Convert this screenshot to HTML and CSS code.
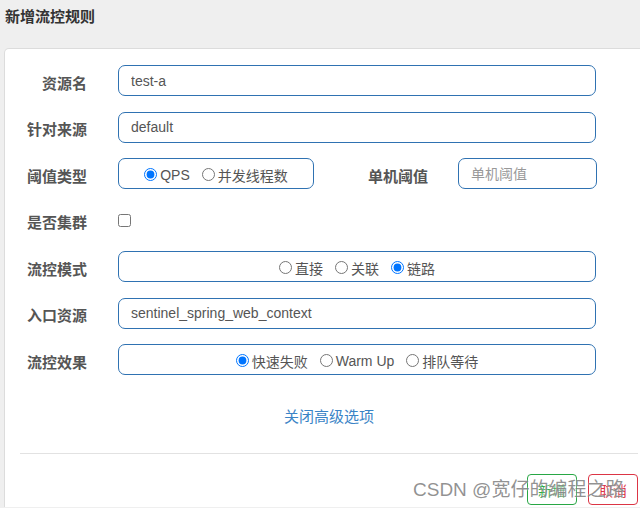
FILE: index.html
```html
<!DOCTYPE html>
<html lang="zh-CN">
<head>
<meta charset="utf-8">
<title>新增流控规则</title>
<link rel="stylesheet" href="styles.css">
</head>
<body>
<div class="title">新增流控规则</div>
<div class="card">
  <div class="form">
    <div class="row">
      <label class="lbl">资源名</label>
      <input class="field" type="text" value="test-a">
    </div>
    <div class="row">
      <label class="lbl">针对来源</label>
      <input class="field" type="text" value="default">
    </div>
    <div class="row">
      <label class="lbl">阈值类型</label>
      <div class="split">
        <div class="box box-small">
          <label class="opt"><input type="radio" name="grade" checked>QPS</label>
          <label class="opt"><input type="radio" name="grade">并发线程数</label>
        </div>
        <label class="lbl lbl-mid">单机阈值</label>
        <input class="field field-small" type="text" placeholder="单机阈值">
      </div>
    </div>
    <div class="row">
      <label class="lbl">是否集群</label>
      <div><input class="check" type="checkbox"></div>
    </div>
    <div class="row">
      <label class="lbl">流控模式</label>
      <div class="box">
        <label class="opt"><input type="radio" name="mode">直接</label>
        <label class="opt"><input type="radio" name="mode">关联</label>
        <label class="opt"><input type="radio" name="mode" checked>链路</label>
      </div>
    </div>
    <div class="row">
      <label class="lbl">入口资源</label>
      <input class="field" type="text" value="sentinel_spring_web_context">
    </div>
    <div class="row">
      <label class="lbl">流控效果</label>
      <div class="box">
        <label class="opt"><input type="radio" name="effect" checked>快速失败</label>
        <label class="opt"><input type="radio" name="effect">Warm Up</label>
        <label class="opt"><input type="radio" name="effect">排队等待</label>
      </div>
    </div>
  </div>
  <div class="more"><a class="link">关闭高级选项</a></div>
  <div class="footer">
    <button class="btn btn-ok">新增</button>
    <button class="btn btn-cancel">取消</button>
  </div>
</div>
<div class="watermark">CSDN @宽仔的编程之路</div>
</body>
</html>
```

FILE: styles.css
```css
html, body {
  margin: 0;
  padding: 0;
  height: 508px;
  overflow: hidden;
}
body {
  background: #efefef;
  width: 640px;
  position: relative;
  font-family: "Liberation Sans", "Noto Sans CJK SC", sans-serif;
  color: #555;
}
.title {
  font-size: 15px;
  font-weight: bold;
  color: #333;
  padding: 7px 5px 0 5px;
  height: 41px;
  line-height: 20px;
}
.card {
  margin-left: 4px;
  width: 648px;
  height: 458px;
  background: #fff;
  border: 1px solid #dcdcdc;
  border-bottom: none;
  border-radius: 5px 5px 0 0;
}
.form {
  padding-top: 16px;
}
.row {
  display: grid;
  grid-template-columns: 82px 478px;
  column-gap: 31px;
  align-items: center;
  height: 31px;
  margin-bottom: 15.5px;
}
.row:last-child {
  margin-bottom: 0;
}
.lbl {
  font-size: 15px;
  font-weight: bold;
  color: #555;
  text-align: right;
  padding-top: 3px;
}
.field {
  box-sizing: border-box;
  height: 31px;
  width: 100%;
  border: 1px solid #2f72b2;
  border-radius: 7px;
  padding: 0 12px;
  font-family: inherit;
  font-size: 14px;
  color: #555;
  outline: none;
  background: #fff;
}
.field::placeholder {
  color: #999;
}
.split {
  display: flex;
  align-items: center;
}
.box {
  box-sizing: border-box;
  height: 31px;
  border: 1px solid #2f72b2;
  border-radius: 7px;
  display: flex;
  align-items: center;
  justify-content: center;
  gap: 12px;
  padding-top: 2px;
}
.box-small {
  width: 196px;
  flex: none;
}
.lbl-mid {
  width: 114px;
  flex: none;
  margin-right: 30px;
}
.field-small {
  width: 139px;
  flex: none;
}
.opt {
  display: flex;
  align-items: center;
  font-size: 14px;
  color: #555;
}
.opt input {
  margin: 0 3px 0 0;
  width: 13px;
  height: 13px;
}
.check {
  margin: 0;
  width: 13px;
  height: 13px;
  display: block;
}
.more {
  text-align: center;
  margin-top: 32px;
  height: 20px;
  line-height: 20px;
}
.link {
  font-size: 15px;
  color: #3a84c6;
  cursor: pointer;
}
.footer {
  margin: 26px 15px 0 15px;
  border-top: 1px solid #e2e2e2;
  padding-top: 20px;
  display: flex;
  justify-content: flex-end;
  gap: 11px;
}
.btn {
  box-sizing: border-box;
  width: 50px;
  height: 31px;
  background: #fff;
  border-radius: 4px;
  font-family: inherit;
  font-size: 14px;
  padding: 0;
}
.btn-ok {
  border: 1px solid #28a745;
  color: #28a745;
}
.btn-cancel {
  border: 1px solid #dc3545;
  color: #dc3545;
}
.watermark {
  position: absolute;
  left: 413px;
  top: 477px;
  font-size: 19px;
  line-height: 26px;
  color: rgba(110, 110, 110, 0.75);
  text-shadow: 0 0 2px #fff;
  white-space: nowrap;
}
```
